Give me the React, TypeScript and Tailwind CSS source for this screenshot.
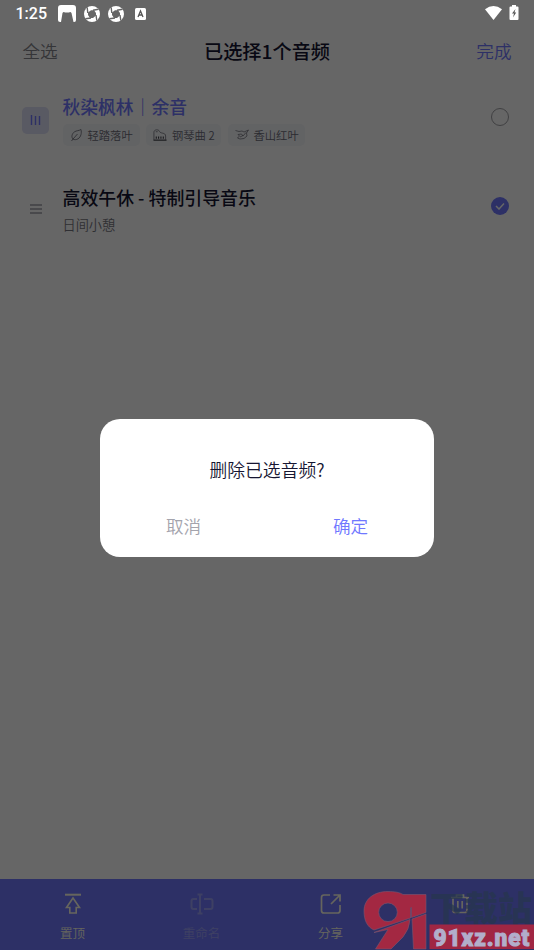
import React from "react";
import { clsx } from "clsx";

interface TagProps {
  label: string;
  width: string;
  children: React.ReactNode;
}

const Tag: React.FC<TagProps> = ({ label, width, children }) => (
  <span
    className={clsx(
      "flex h-[22px] items-center gap-[5px] rounded-[5px] bg-[#f5f7fb] pl-[7px] text-[11.3px] font-[350] text-[#6c6c78]",
      width
    )}
  >
    {children}
    <span className="whitespace-nowrap">{label}</span>
  </span>
);

const LeafIcon = () => (
  <svg width="13" height="14" viewBox="0 0 13 14" fill="none" stroke="#666670" strokeWidth="0.8">
    <path d="M1.500 13 3 11C1 9 2 5.500 4.500 3.800 6.500 2.500 9 2.800 11 1.500 11.800 5 11 9 8 10.800 6.500 11.800 4.300 12 3 11L7.500 6" />
  </svg>
);

const PianoIcon = () => (
  <svg width="14" height="14" viewBox="0 0 15 14" fill="none" stroke="#666670" strokeWidth="0.8">
    <path d="M1 12V4C1 1 6 .5 7 3.200 7.800 5.800 13.500 4 13.500 8V12M3 3.500H5" />
    <path d="M0.500 12.500H14.500" stroke="#33333b" strokeWidth="1.200" />
    <path d="M3.500 8.500V11M6 8.500V11M8.500 8.500V11M11 8.500V11" stroke="#33333b" strokeWidth="1.100" />
  </svg>
);

const MapleIcon = () => (
  <svg width="14" height="12" viewBox="0 0 14 12" fill="none" stroke="#666670" strokeWidth="0.7">
    <path d="M.5 1.500 4 2.500 7 2 9 3 13.500 1 11.500 4 12 7 9 9.500 5 10 2.500 9 4.500 7 3 5.500 6.500 5 8 7 11 3.500M5 8 8 6.500" />
  </svg>
);

const StatusBar = () => (
  <div className="absolute inset-x-0 top-0 flex h-7 items-center pl-[15.500px] pr-[15px] text-white">
    <span className="w-[42.500px] font-[Roboto] text-[16px] font-medium leading-7">1:25</span>
    <svg className="shrink-0" width="18" height="18" viewBox="0 0 18 18" fill="currentColor">
      <path d="M3 0H15Q18 0 18 3V15Q18 17.500 15.500 17L13.500 8Q12.500 6.500 11 7.500H7Q5.500 6.500 4.500 8L3 17Q0 17.500 0 15V3Q0 0 3 0Z" />
    </svg>
    {[0, 1].map((i) => (
      <svg key={i} className="ml-2 shrink-0" width="16" height="16" viewBox="0 0 16 16">
        <circle cx="8" cy="8" r="8" fill="currentColor" />
        <path d="M7 4.200H10L12 7V9.500L9 12H6L4 9V6.500Z" fill="#666" />
        <path d="M3.800 7 3.200 1.500M9 4.200 14.500 3.200M12 9 12.800 14.500M7 12 1.500 12.800" stroke="#666" strokeWidth="1.400" />
      </svg>
    ))}
    <svg className="ml-[11px] shrink-0" width="11" height="12" viewBox="0 0 11 12">
      <rect width="11" height="12" rx="1.500" fill="currentColor" />
      <path d="M3 9 5.500 3 8 9M4 7H7" fill="none" stroke="#555" strokeWidth="1.300" />
    </svg>
    <svg className="-mt-[2px] ml-auto" width="17" height="14" viewBox="0 0 17 14" fill="currentColor">
      <path d="M0 3.200Q8.500-3 17 3.200L8.500 14Z" />
    </svg>
    <svg className="-mt-[3px] ml-[7px]" width="10" height="15" viewBox="0 0 10 15">
      <path d="M3 0H7V1.500H8.500Q9.500 1.500 9.500 2.500V14Q9.500 15 8.500 15H1.500Q.5 15 .5 14V2.500Q.5 1.500 1.500 1.500H3Z" fill="currentColor" />
      <path d="M6.500 4 3 8.500H5L4 12.500 7.200 7.500H5.500Z" fill="#555" />
    </svg>
  </div>
);

const Watermark = () => (
  <svg className="absolute bottom-0 right-0" width="172" height="62" viewBox="362 888 172 62">
    <g fill="#a32842" stroke="#7b5570" strokeWidth="0.6">
      <path
        fillRule="evenodd"
        d="M374 930C367 927 364 920 364 911 364 899 374 891.500 388 891.500 395 891.500 400 892.500 403 894.500H426V912.500L411.500 917.500V909Q411.500 906 410.500 908V918L374 930ZM388 903A9.300 9.300 0 1 0 388 921.600 9.300 9.300 0 1 0 388 903Z"
      />
      <path d="M374 932.500 410 919.500Q409.500 929 403 937L391 949H375.500L388 929.500Z" />
      <path d="M412 919 426 914V949H413.500Z" />
    </g>
    <text
      x="430"
      y="921"
      fontSize="34"
      fontWeight="900"
      textLength="102"
      lengthAdjust="spacingAndGlyphs"
      fill="#26364c"
      fillOpacity="0.7"
      fontFamily="'Noto Sans CJK SC', sans-serif"
    >
      下载站
    </text>
    <rect x="429.500" y="924.500" width="105" height="24.500" fill="#a02643" />
    <text
      transform="translate(433.500 946) scale(.8 1)"
      fontSize="24"
      fontWeight="900"
      letterSpacing="1"
      textLength="121"
      lengthAdjust="spacingAndGlyphs"
      fill="#b2aecb"
      stroke="#b2aecb"
      strokeWidth="1"
      fontFamily="'Roboto', sans-serif"
    >
      91xz.net
    </text>
  </svg>
);

const TrashIcon = () => (
  <svg width="24" height="24" viewBox="0 0 24 24" fill="none" stroke="currentColor" strokeWidth="1.700">
    <path d="M3 5.500H21M8.500 5V3H15.500V5M5 6V18.500Q5 20.500 7 20.500H17Q19 20.500 19 18.500V6M9.800 9V16.500M14.200 9V16.500" />
  </svg>
);

const actions = [
  {
    label: "置顶",
    disabled: false,
    icon: (
      <svg width="24" height="24" viewBox="0 0 24 24" fill="none" stroke="currentColor" strokeWidth="1.600">
        <path d="M4 2.700H20" strokeWidth="2" />
        <path d="M12 6 18.500 15.500H15.200V21H8.800V15.500H5.500Z" />
      </svg>
    ),
  },
  {
    label: "重命名",
    disabled: true,
    icon: (
      <svg width="24" height="24" viewBox="0 0 24 24" fill="none" stroke="currentColor" strokeWidth="2">
        <path d="M7 7H3.500Q1.500 7 1.500 9V15Q1.500 17 3.500 17H7M14 7H20.500Q22.500 7 22.500 9V15Q22.500 17 20.500 17H14M10 3V21M7.500 2.500H12.500M7.500 21.500H12.500" />
      </svg>
    ),
  },
  {
    label: "分享",
    disabled: false,
    icon: (
      <svg width="24" height="24" viewBox="0 0 24 24" fill="none" stroke="currentColor" strokeWidth="1.700">
        <path d="M11 3H5Q2.500 3 2.500 5.500V18.500Q2.500 21 5 21H18.500Q21 21 21 18.500V13M14.500 3H21V9.500M21 3 12 12" />
      </svg>
    ),
  },
  { label: "删除", disabled: false, icon: <TrashIcon /> },
];

const App: React.FC = () => {
  return (
    <div className="relative flex h-[950px] w-[534px] flex-col overflow-hidden bg-white font-['Noto_Sans_CJK_SC',sans-serif] text-[#161632]">
      <header className="mt-7 grid h-[46px] grid-cols-3 items-center px-[22.500px]">
        <span className="text-[17.6px] font-[350] text-[#85858d]">全选</span>
        <h1 className="whitespace-nowrap text-center text-[19.2px] font-medium">已选择1个音频</h1>
        <span className="text-right text-[17.6px] font-[350] text-[#7078ff]">完成</span>
      </header>

      <main className="flex flex-1 flex-col">
        <section className="flex h-[92px] items-center px-[22px]">
          <span className="flex size-[27px] items-center justify-center rounded-[5px] bg-[#dfe0f7]">
            <svg width="11" height="12" viewBox="0 0 11 12" stroke="#7078ff" strokeWidth="1.400">
              <path d="M1.500 1V11M5.500 2V11M9.500 2V11" />
            </svg>
          </span>
          <div className="ml-[13.500px] flex-1">
            <h2 className="text-[17.8px] font-medium leading-6 text-[#7078ff]">秋染枫林｜余音</h2>
            <div className="mt-[6px] flex gap-[6.500px]">
              <Tag label="轻踏落叶" width="w-[77px]">
                <LeafIcon />
              </Tag>
              <Tag label="钢琴曲 2" width="w-[75px]">
                <PianoIcon />
              </Tag>
              <Tag label="香山红叶" width="w-[77px]">
                <MapleIcon />
              </Tag>
            </div>
          </div>
          <span className="mb-[6px] mr-[3px] size-[18px] rounded-full border-[1.500px] border-[#a0a0a5]" />
        </section>

        <section className="-mt-px flex h-[88px] items-center px-[22px]">
          <span className="flex w-[27px] justify-center">
            <svg width="12" height="10" viewBox="0 0 12 10" stroke="#a0a0a8" strokeWidth="1.500">
              <path d="M0 1H12M0 5H12M0 9H12" />
            </svg>
          </span>
          <div className="ml-[13.500px] mt-[2px] flex-1">
            <h2 className="text-[17.9px] font-medium leading-6">高效午休 - 特制引导音乐</h2>
            <p className="mt-[6px] text-[13.2px] font-[350] leading-5 text-[#777780]">日间小憩</p>
          </div>
          <span className="mb-[6px] mr-[3px] flex size-[18px] items-center justify-center rounded-full bg-[#7078ff]">
            <svg width="10" height="8" viewBox="0 0 10 8" fill="none" stroke="white" strokeWidth="1.500">
              <path d="M1 4 4 7 9 1.500" />
            </svg>
          </span>
        </section>
      </main>

      <nav className="flex h-[71px] bg-[#7078ff] pl-2 pr-[10px] text-[#fffde8]">
        {actions.map((action) => (
          <div
            key={action.label}
            className={clsx("flex flex-1 flex-col items-center pt-[13px]", action.disabled && "opacity-30")}
          >
            {action.icon}
            <span className="mt-[7px] text-[12.5px] font-[350] leading-5">{action.label}</span>
          </div>
        ))}
      </nav>

      <div className="absolute inset-0 flex items-center justify-center bg-black/60 pt-[26px]">
        <div className="flex h-[138px] w-[334px] flex-col rounded-[20px] bg-white">
          <p className="mt-[38px] text-center text-[17.8px] font-[350] leading-6">删除已选音频?</p>
          <div className="mt-[33px] grid grid-cols-2 text-center text-[17.6px] leading-6">
            <button className="font-[350] text-[#a4a4ad]">取消</button>
            <button className="font-[350] text-[#7078ff]">确定</button>
          </div>
        </div>
      </div>

      <StatusBar />
      <Watermark />
    </div>
  );
};

export default App;
